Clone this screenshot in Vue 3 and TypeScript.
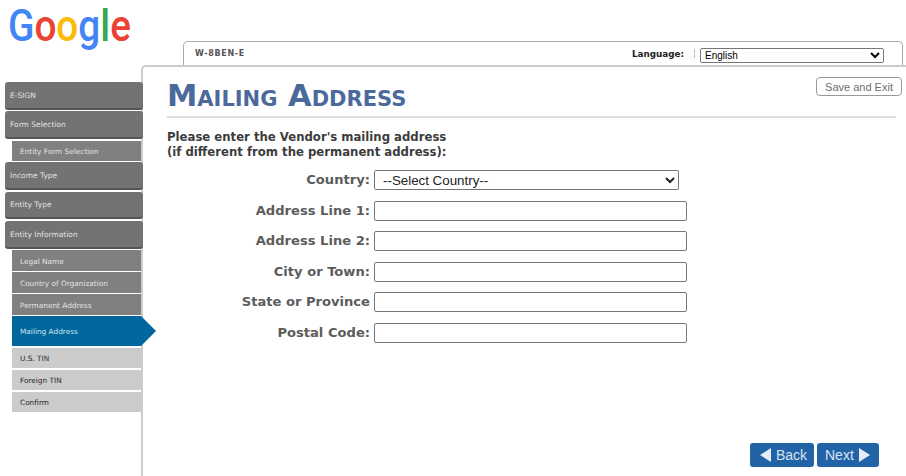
<script setup lang="ts">
interface NavItem {
  label: string
  kind: 'section' | 'done' | 'current' | 'todo'
}

const nav: NavItem[] = [
  { label: 'E-SIGN', kind: 'section' },
  { label: 'Form Selection', kind: 'section' },
  { label: 'Entity Form Selection', kind: 'done' },
  { label: 'Income Type', kind: 'section' },
  { label: 'Entity Type', kind: 'section' },
  { label: 'Entity Information', kind: 'section' },
  { label: 'Legal Name', kind: 'done' },
  { label: 'Country of Organization', kind: 'done' },
  { label: 'Permanent Address', kind: 'done' },
  { label: 'Mailing Address', kind: 'current' },
  { label: 'U.S. TIN', kind: 'todo' },
  { label: 'Foreign TIN', kind: 'todo' },
  { label: 'Confirm', kind: 'todo' }
]

const fields = ['Address Line 1:', 'Address Line 2:', 'City or Town:', 'State or Province', 'Postal Code:']
</script>

<template>
  <div class="page">
    <header class="top">
      <div class="logo">
        <span class="blue">G</span><span class="red">o</span><span class="yellow">o</span><span class="blue">g</span><span class="green">l</span><span class="red">e</span>
      </div>
      <div class="tab">
        <span class="form-name">W-8BEN-E</span>
        <span class="lang-label">Language:</span>
        <span class="lang-sep"></span>
        <select class="lang-select">
          <option>English</option>
        </select>
      </div>
    </header>

    <div class="body">
      <nav class="sidebar">
        <div v-for="item in nav" :key="item.label" :class="['nav-item', item.kind]">{{ item.label }}</div>
      </nav>

      <main class="panel">
        <div class="title-row">
          <h1>Mailing Address</h1>
          <button class="save">Save and Exit</button>
        </div>
        <p class="intro">Please enter the Vendor's mailing address<br />(if different from the permanent address):</p>

        <div class="form">
          <label>Country:</label>
          <select class="country">
            <option>--Select Country--</option>
          </select>
          <template v-for="field in fields" :key="field">
            <label>{{ field }}</label>
            <input type="text" />
          </template>
        </div>

        <div class="actions">
          <button class="step back">
            <svg width="11" height="14" viewBox="0 0 11 14"><path d="M11 0v14L0 7z" /></svg>
            Back
          </button>
          <button class="step next">
            Next
            <svg width="11" height="14" viewBox="0 0 11 14"><path d="M0 0v14l11-7z" /></svg>
          </button>
        </div>
      </main>
    </div>
  </div>
</template>

<style>
html,
body {
  margin: 0;
  background: #fff;
  overflow: hidden;
}
</style>

<style scoped>
.page {
  width: 906px;
  height: 476px;
  font-family: "DejaVu Sans", Verdana, sans-serif;
  display: flex;
  flex-direction: column;
}

.top {
  height: 65px;
  display: flex;
  align-items: flex-end;
  flex-shrink: 0;
}

.logo {
  align-self: flex-start;
  width: 183px;
  padding-left: 8px;
  box-sizing: border-box;
  font-family: Roboto, sans-serif;
  font-size: 44px;
  font-weight: 500;
  line-height: 52px;
  transform: scaleX(0.88);
  transform-origin: 8px 0;
}

.blue { color: #4285f4; }
.red { color: #ea4335; }
.yellow { color: #fbbc05; }
.green { color: #34a853; }

.tab {
  width: 720px;
  height: 24px;
  box-sizing: border-box;
  border: 1px solid #aaa;
  border-bottom: none;
  border-radius: 5px 5px 0 0;
  display: flex;
  align-items: center;
  padding-left: 11px;
}

.form-name {
  font-size: 8px;
  font-weight: bold;
  color: #555;
  letter-spacing: 0.7px;
  width: 437px;
}

.lang-label {
  font-size: 8.8px;
  font-weight: bold;
  color: #222;
  width: 62px;
}

.lang-sep {
  width: 1px;
  height: 9px;
  background: #bbb;
  margin-right: 5px;
}

.lang-select {
  width: 184px;
  height: 15px;
  margin-top: 4px;
  padding: 0;
  font-family: "Liberation Sans", sans-serif;
  font-size: 10px;
  box-sizing: border-box;
}

.body {
  flex: 1;
  display: flex;
  min-height: 0;
}

.sidebar {
  width: 143px;
  margin-right: -2px;
  padding: 17px 0 0 5px;
  box-sizing: border-box;
  position: relative;
  z-index: 1;
  flex-shrink: 0;
}

.nav-item {
  display: flex;
  align-items: center;
  font-size: 7.5px;
  box-sizing: border-box;
  position: relative;
}

.section {
  height: 27.6px;
  margin-bottom: 1.7px;
  padding: 0.6px 0 0 5px;
  width: 138px;
  background: #737373;
  border-bottom: 2px solid #555;
  border-radius: 3px;
  color: #e2e2e2;
}

.done,
.current,
.todo {
  margin-left: 7px;
  width: 129px;
  padding: 1.4px 0 0 8px;
  font-size: 7.35px;
}

.done {
  height: 20.6px;
  margin-bottom: 1.3px;
  background: #808080;
  color: #e2e2e2;
}

.current {
  height: 30px;
  margin-bottom: 1.9px;
  background: #00679c;
  color: #cfe6f2;
}

.current::after {
  content: "";
  position: absolute;
  left: 100%;
  top: 0;
  border-left: 15px solid #00679c;
  border-top: 15px solid transparent;
  border-bottom: 15px solid transparent;
}

.todo {
  height: 20.3px;
  margin-bottom: 1.7px;
  background: #cbcbcb;
  color: #2a2a2a;
}

.panel {
  flex: 1;
  min-width: 0;
  border-top: 2px solid #ccc;
  border-left: 2px solid #ccc;
  border-top-left-radius: 5px;
  padding: 11px 10px 0 24px;
  display: flex;
  flex-direction: column;
}

.title-row {
  height: 38px;
  display: flex;
  justify-content: space-between;
  align-items: flex-start;
  border-bottom: 2px solid #ddd;
}

h1 {
  margin: 0;
  font-size: 30.5px;
  line-height: 36px;
  font-weight: bold;
  font-variant: small-caps;
  color: #4b6a9b;
  white-space: nowrap;
}

.save {
  margin: -1px -6px 0 0;
  width: 86px;
  height: 19px;
  padding: 0;
  background: #fff;
  border: 1px solid #999;
  border-radius: 4px;
  font-family: "Liberation Sans", sans-serif;
  font-size: 11px;
  color: #6e6e6e;
}

.intro {
  margin: 12px 0 0;
  font-size: 11.7px;
  line-height: 15px;
  font-weight: bold;
  color: #3c3c3c;
}

.form {
  margin-top: 10px;
  display: grid;
  grid-template-columns: 203px 313px;
  column-gap: 4px;
  row-gap: 10.6px;
  align-items: center;
}

.form label {
  margin-top: -1px;
  text-align: right;
  font-size: 13.1px;
  font-weight: bold;
  color: #5c5c5c;
  white-space: nowrap;
}

.country {
  width: 305px;
  height: 20px;
  padding: 0 0 0 4px;
  box-sizing: border-box;
  font-family: "Liberation Sans", sans-serif;
  font-size: 13.33px;
  color: #222;
}

.form input {
  width: 313px;
  height: 20px;
  padding: 0;
  box-sizing: border-box;
  border: 1px solid #777;
  border-radius: 2px;
  background: #fff;
}

.actions {
  margin-top: auto;
  margin-bottom: 9px;
  margin-right: 17px;
  display: flex;
  justify-content: flex-end;
  gap: 3px;
}

.step {
  height: 24px;
  display: flex;
  align-items: center;
  gap: 5px;
  background: #2263a8;
  border: none;
  border-radius: 3px;
  font-family: "Liberation Sans", sans-serif;
  font-size: 14px;
  color: #d8e4f0;
}

.back {
  width: 64px;
  padding: 0 0 0 10px;
}

.next {
  width: 62px;
  padding: 0 0 0 8px;
}

.step svg {
  fill: #e4edf6;
}
</style>
